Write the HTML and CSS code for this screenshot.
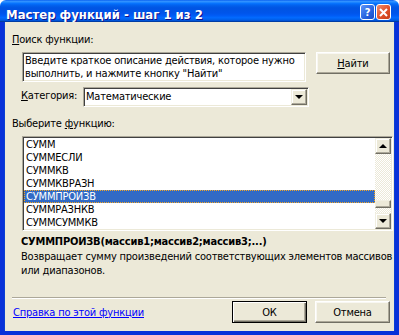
FILE: index.html
```html
<!DOCTYPE html>
<html lang="ru">
<head>
  <meta charset="UTF-8">
  <title>Мастер функций - шаг 1 из 2</title>
  <link rel="stylesheet" href="styles.css">
</head>
<body>
  <div class="window">
    <div class="titlebar">
      <span class="title">Мастер функций - шаг 1 из 2</span>
      <div class="title-btns">
        <span class="tbtn help">?</span>
        <span class="tbtn close">
          <svg width="9" height="9" viewBox="0 0 9 9"><path d="M1 1L8 8M8 1L1 8" stroke="#fff" stroke-width="2"/></svg>
        </span>
      </div>
    </div>

    <div class="dialog">
      <div class="label"><u>П</u>оиск функции:</div>
      <div class="search-row">
        <div class="textbox">Введите краткое описание действия, которое нужно выполнить, и нажмите кнопку "Найти"</div>
        <button class="btn"><u>Н</u>айти</button>
      </div>

      <div class="cat-row">
        <span class="cat-label"><u>К</u>атегория:</span>
        <div class="combo">
          <span class="combo-text">Математические</span>
          <span class="combo-btn"><span class="arrow-down"></span></span>
        </div>
      </div>

      <div class="label list-label">Выберите <u>ф</u>ункцию:</div>
      <div class="listbox">
        <div class="items">
          <div class="item">СУММ</div>
          <div class="item">СУММЕСЛИ</div>
          <div class="item">СУММКВ</div>
          <div class="item">СУММКВРАЗН</div>
          <div class="item selected">СУММПРОИЗВ</div>
          <div class="item">СУММРАЗНКВ</div>
          <div class="item">СУММСУММКВ</div>
        </div>
        <div class="scrollbar">
          <span class="sbtn"><span class="arrow-up"></span></span>
          <span class="track"><span class="thumb"></span></span>
          <span class="sbtn"><span class="arrow-down"></span></span>
        </div>
      </div>

      <div class="signature">СУММПРОИЗВ(массив1;массив2;массив3;...)</div>
      <div class="desc">Возвращает сумму произведений соответствующих элементов массивов или диапазонов.</div>

      <div class="footer">
        <div class="separator"></div>
        <div class="footer-row">
          <a class="help-link" href="#">Справка по этой функции</a>
          <button class="btn default">ОК</button>
          <button class="btn">Отмена</button>
        </div>
      </div>
    </div>
  </div>
</body>
</html>
```

FILE: styles.css
```css
* {
  box-sizing: border-box;
}

body {
  margin: 0;
  background: #fff;
}

.window {
  width: 399px;
  height: 335px;
  display: flex;
  flex-direction: column;
  font-family: "DejaVu Sans Condensed", "DejaVu Sans", sans-serif;
  font-stretch: condensed;
  font-size: 11px;
  line-height: 13px;
  letter-spacing: -0.2px;
  color: #000;
}

/* title bar */
.titlebar {
  flex: none;
  height: 22px;
  display: flex;
  align-items: flex-start;
  padding: 0 8px 0 6px;
  border-radius: 6px 6px 0 0;
  background: linear-gradient(to bottom, #0058ee 0%, #3593ff 5%, #288eff 9%, #127dff 13%, #036ffc 17%, #0262ee 24%, #0057e5 33%, #0054e3 40%, #0055eb 60%, #005bf5 70%, #026afe 80%, #0062ef 88%, #0052d6 94%, #0040ab 97%, #003092 100%);
}

.title {
  padding-top: 7px;
  font-size: 13px;
  line-height: 15px;
  font-weight: bold;
  letter-spacing: 0;
  color: #fff;
  text-shadow: 1px 1px #0f1089;
  white-space: nowrap;
}

.title-btns {
  margin-left: auto;
  margin-top: 4px;
  display: flex;
  gap: 1px;
}

.tbtn {
  width: 15px;
  height: 16px;
  border: 1px solid #fff;
  border-radius: 3px;
  display: flex;
  align-items: center;
  justify-content: center;
}

.help {
  background: linear-gradient(135deg, #5d94f8, #2663e0 60%, #1a4cc4);
  color: #fff;
  font-family: "DejaVu Sans", sans-serif;
  font-weight: bold;
  font-size: 11px;
}

.close {
  background: linear-gradient(135deg, #f08c6c, #e0512a 55%, #c63d17);
}

/* dialog body */
.dialog {
  flex: 1;
  display: flex;
  flex-direction: column;
  background: #ece9d8;
  border: solid #0831d9;
  border-width: 0 4px 4px;
  box-shadow: inset 1px 0 #0a3fd4, inset -1px 0 #0a3fd4;
  padding: 11px 5px 8px 4px;
}

.label {
  padding-left: 4px;
}

.search-row {
  display: flex;
  align-items: flex-start;
  margin: 6px 0 0 14px;
}

.textbox {
  width: 287px;
  height: 30px;
  padding: 1px 2px;
  background: #fff;
  border: 1px solid;
  border-color: #aca899 #fff #fff #aca899;
  box-shadow: inset 1px 1px #404040, inset -1px -1px #ece9d8;
}

.btn {
  width: 75px;
  height: 22px;
  margin: 0;
  padding: 0;
  font: inherit;
  letter-spacing: inherit;
  color: #000;
  background: #ece9d8;
  border: 1px solid;
  border-color: #fff #716f64 #716f64 #fff;
  box-shadow: inset -1px -1px #aca899, inset 1px 1px #f8f7f2;
}

.btn.default {
  border-color: #000;
  box-shadow: inset 1px 1px #fff, inset -1px -1px #716f64, inset -2px -2px #aca899;
}

.search-row .btn {
  margin-left: 10px;
}

.cat-row {
  display: flex;
  align-items: flex-start;
  justify-content: space-between;
  width: 288px;
  margin: 5px 0 0 13px;
}

.cat-label {
  margin-top: 2px;
}

.combo {
  width: 226px;
  height: 20px;
  display: flex;
  background: #fff;
  border: 1px solid;
  border-color: #aca899 #fff #fff #aca899;
  box-shadow: inset 1px 1px #404040, inset -1px -1px #ece9d8;
  padding: 1px;
}

.combo-text {
  flex: 1;
  padding: 1px 0 0 1px;
}

.combo-btn,
.sbtn {
  width: 16px;
  height: 16px;
  display: flex;
  align-items: center;
  justify-content: center;
  background: #ece9d8;
  border: 1px solid;
  border-color: #f1efe2 #716f64 #716f64 #f1efe2;
  box-shadow: inset -1px -1px #aca899, inset 1px 1px #fff;
}

.arrow-down {
  width: 0;
  height: 0;
  border-left: 4px solid transparent;
  border-right: 4px solid transparent;
  border-top: 4px solid #000;
}

.arrow-up {
  width: 0;
  height: 0;
  border-left: 4px solid transparent;
  border-right: 4px solid transparent;
  border-bottom: 4px solid #000;
}

.list-label {
  margin-top: 10px;
}

/* function list */
.listbox {
  display: flex;
  width: 371px;
  height: 95px;
  margin: 6px 0 0 14px;
  background: #fff;
  border: 1px solid;
  border-color: #aca899 #fff #fff #aca899;
  box-shadow: inset 1px 1px #404040, inset -1px -1px #ece9d8;
  padding: 1px;
}

.items {
  flex: 1;
}

.item {
  height: 13px;
  padding-left: 2px;
  white-space: nowrap;
}

.item.selected {
  background: #316ac5;
  color: #fff;
  outline: 1px dotted #f5a623;
  outline-offset: -1px;
}

.scrollbar {
  width: 16px;
  display: flex;
  flex-direction: column;
}

.track {
  flex: 1;
  display: flex;
  flex-direction: column;
  justify-content: flex-end;
  padding-bottom: 5px;
  background: conic-gradient(#fff 25%, #ece9d8 0 50%, #fff 0 75%, #ece9d8 0) 0 0 / 2px 2px;
}

.thumb {
  height: 8px;
  background: #ece9d8;
  border: 1px solid;
  border-color: #f1efe2 #716f64 #716f64 #f1efe2;
  box-shadow: inset -1px -1px #aca899;
}

.signature {
  margin: 4px 0 0 13px;
  font-weight: bold;
}

.desc {
  margin: 2px 0 0 13px;
  width: 376px;
  line-height: 14px;
}

/* footer */
.footer {
  margin-top: auto;
}

.separator {
  height: 2px;
  margin: 0 4px 0 4px;
  border-top: 1px solid #aca899;
  border-bottom: 1px solid #fff;
}

.footer-row {
  display: flex;
  align-items: center;
  gap: 8px;
  margin-top: 2px;
}

.help-link {
  margin-right: auto;
  padding-left: 5px;
  color: #0000ff;
}
```
